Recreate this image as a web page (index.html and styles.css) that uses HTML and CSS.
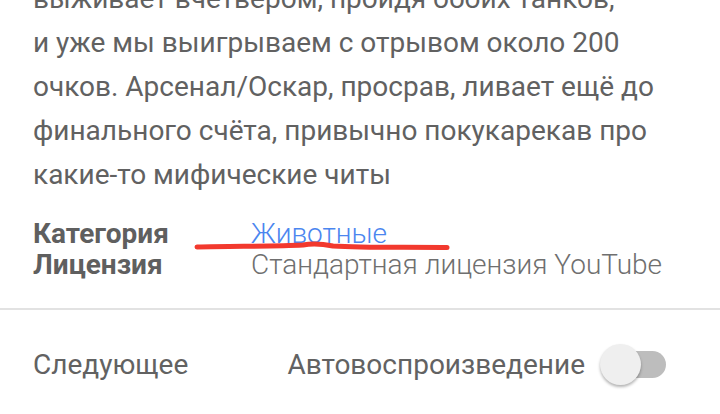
FILE: index.html
```html
<!DOCTYPE html>
<html lang="ru">
<head>
<meta charset="utf-8">
<link rel="stylesheet" href="styles.css">
</head>
<body>
<div class="page">
  <p class="desc">выживает вчетвером, пройдя обоих танков,<br>и уже мы выигрываем с отрывом около 200<br>очков. Арсенал/Оскар, просрав, ливает ещё до<br>финального счёта, привычно покукарекав про<br>какие-то мифические читы</p>
  <div class="meta">
    <div class="row">
      <span class="label">Категория</span>
      <span class="value link">Животные</span>
      <svg class="scribble" width="270" height="16" viewBox="0 0 270 16">
        <path d="M4 8 C 40 7, 80 7.5, 110 6 C 120 4, 130 5, 140 7 C 170 9, 210 8, 250 8.5 L 254 8.5" fill="none" stroke="#f2392e" stroke-width="5" stroke-linecap="round"/>
      </svg>
    </div>
    <div class="row">
      <span class="label">Лицензия</span>
      <span class="value">Стандартная лицензия YouTube</span>
    </div>
  </div>
  <div class="divider"></div>
  <div class="next">
    <span class="next-title">Следующее</span>
    <div class="autoplay">
      <span class="autoplay-label">Автовоспроизведение</span>
      <span class="switch"><span class="track"></span><span class="thumb"></span></span>
    </div>
  </div>
</div>
</body>
</html>
```
FILE: styles.css
```css
html, body {
  margin: 0;
  padding: 0;
  background: #ffffff;
}
body {
  width: 720px;
  height: 414px;
  overflow: hidden;
  font-family: Roboto, "Noto Sans", sans-serif;
}
.page {
  display: flex;
  flex-direction: column;
}
.desc {
  margin: -23px 0 0 0;
  padding-left: 33px;
  font-size: 28px;
  line-height: 44px;
  color: #616161;
  white-space: nowrap;
}
.meta {
  margin-top: 21px;
  padding-left: 33px;
  display: flex;
  flex-direction: column;
}
.row {
  position: relative;
  display: flex;
  font-size: 28px;
  line-height: 31px;
  height: 31px;
}
.label {
  width: 218px;
  font-weight: 700;
  color: #5f5f5f;
}
.value {
  font-weight: 300;
  color: #6f6f6f;
}
.link {
  color: #4b86ef;
}
.scribble {
  position: absolute;
  left: 160px;
  top: 21px;
}
.divider {
  margin-top: 28px;
  height: 2px;
  background: #e2e2e2;
}
.next {
  display: flex;
  align-items: center;
  padding: 34px 54px 0 33px;
  font-size: 28px;
  line-height: 42px;
  color: #626262;
}
.next-title {
  width: 257px;
}
.autoplay {
  display: flex;
  align-items: center;
  gap: 15px;
}
.switch {
  position: relative;
  width: 66px;
  height: 42px;
  display: block;
}
.track {
  position: absolute;
  left: 2px;
  right: 0;
  top: 7px;
  height: 27px;
  border-radius: 14px;
  background: #bdbdbd;
}
.thumb {
  position: absolute;
  left: 0;
  top: 0;
  width: 41px;
  height: 41px;
  border-radius: 50%;
  background: #efefef;
  box-shadow: 0 2px 3px rgba(0,0,0,0.3);
}
```
